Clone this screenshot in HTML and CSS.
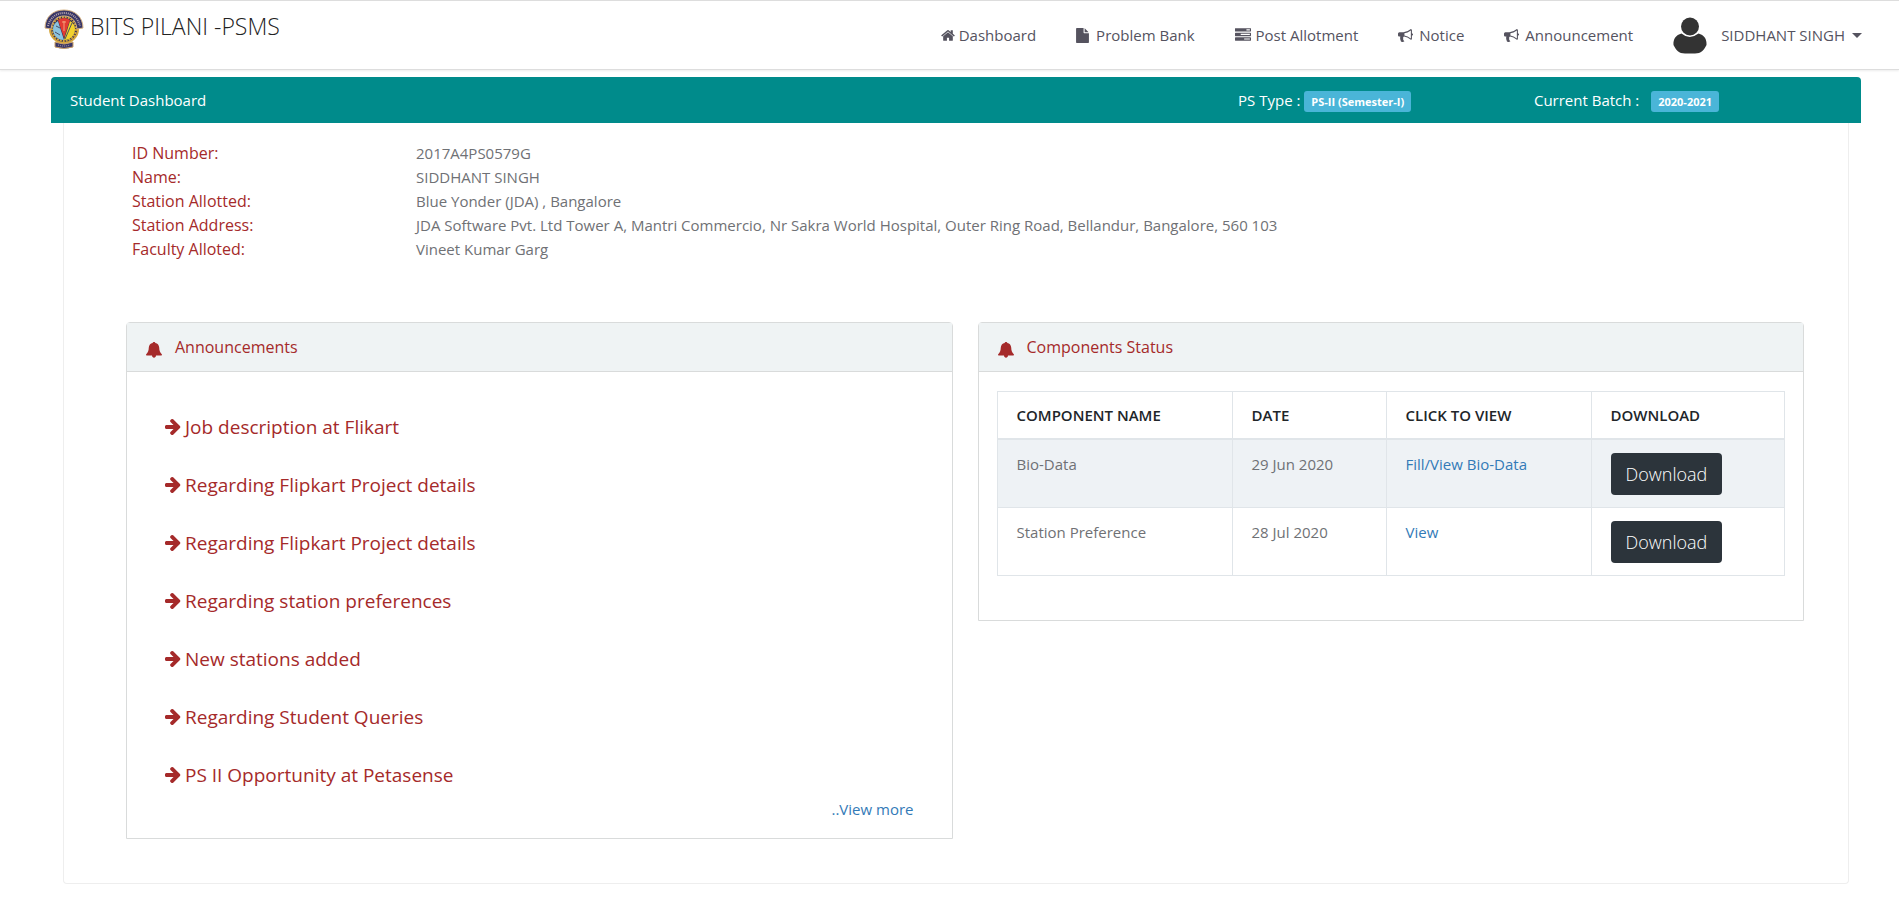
FILE: index.html
```html
<!DOCTYPE html>
<html lang="en">
<head>
<meta charset="utf-8">
<title>BITS PILANI -PSMS</title>
<link rel="stylesheet" href="styles.css">
</head>
<body>
<svg class="sprite" aria-hidden="true">
  <symbol id="home" viewBox="64 0 1664 1792"><path d="M1472 992v480q0 26-19 45t-45 19h-384v-384h-256v384h-384q-26 0-45-19t-19-45v-480q0-1 .5-3t.5-3l575-474 575 474q1 2 1 6zm223-69l-62 74q-8 9-21 11h-3q-13 0-21-7l-692-577-692 577q-12 8-24 7-13-2-21-11l-62-74q-8-10-7-23.500t11-21.500l719-599q32-26 76-26t76 26l244 204v-195q0-14 9-23t23-9h192q14 0 23 9t9 23v408l219 182q10 8 11 21.500t-7 23.500z"/></symbol>
  <symbol id="file" viewBox="128 0 1536 1792"><path d="M1152 512v-472q22 14 36 28l408 408q14 14 28 36h-472zm-128 32q0 40 28 68t68 28h544v1056q0 40-28 68t-68 28h-1344q-40 0-68-28t-28-68v-1600q0-40 28-68t68-28h800v544z"/></symbol>
  <symbol id="tasks" viewBox="0 0 1792 1792"><path d="M1024 1408h640v-128h-640v128zm-384-512h1024v-128h-1024v128zm640-512h384v-128h-384v128zm512 832v256q0 26-19 45t-45 19h-1664q-26 0-45-19t-19-45v-256q0-26 19-45t45-19h1664q26 0 45 19t19 45zm0-512v256q0 26-19 45t-45 19h-1664q-26 0-45-19t-19-45v-256q0-26 19-45t45-19h1664q26 0 45 19t19 45zm0-512v256q0 26-19 45t-45 19h-1664q-26 0-45-19t-19-45v-256q0-26 19-45t45-19h1664q26 0 45 19t19 45z"/></symbol>
  <symbol id="horn" viewBox="0 0 1792 1792"><path d="M1664 640q53 0 90.500 37.500t37.500 90.500-37.500 90.500-90.500 37.500v384q0 52-38 90t-90 38q-417-347-812-380-58 19-91 66t-31 100.500 40 92.500q-20 33-23 65.500t6 58 33.500 55 48 50 61.500 50.500q-29 58-111.500 83t-168.500 11.500-132-55.500q-7-23-29.500-87.500t-32-94.500-23-89-15-101 3.500-98.500 22-110.500h-122q-66 0-113-47t-47-113v-192q0-66 47-113t113-47h480q435 0 896-384 52 0 90 38t38 90v384zm-128 604v-954q-394 302-768 343v270q377 42 768 341z"/></symbol>
  <symbol id="arrow" viewBox="128 128 1536 1664"><path d="M1600 960q0 54-37 91l-651 651q-39 37-91 37-51 0-90-37l-75-75q-38-38-38-91t38-91l293-293h-704q-52 0-84.500-37.500t-32.500-90.500v-128q0-53 32.500-90.500t84.500-37.500h704l-293-294q-38-36-38-90t38-90l75-75q38-38 90-38 53 0 91 38l651 651q37 35 37 90z"/></symbol>
  <symbol id="bell" viewBox="0 0 16 16"><path d="M8 0c.8 0 1.200.4 1.300 1 2.500.5 3.700 2.100 3.900 4.600.2 3.300.6 4.600 2.600 6.700.4.500.1 1.200-.5 1.200H10c-.1 1.400-.9 2.200-2 2.200s-1.900-.8-2-2.200H.7c-.6 0-.9-.7-.5-1.200 2-2.100 2.400-3.400 2.600-6.700C3 3.100 4.200 1.500 6.700 1 6.800.4 7.200 0 8 0z"/></symbol>
</svg>

<header class="topbar">
  <a class="brand" href="#">
    <svg class="logo" viewBox="0 0 40 40" aria-hidden="true">
      <circle cx="20" cy="20" r="14" fill="#2d2b55" stroke="#d5a63b" stroke-width="2"/>
      <circle cx="20" cy="20" r="12" fill="none" stroke="#d5a63b" stroke-width="2" stroke-dasharray="2 1"/>
      <path d="M1 19C1 8 9 1 20 1s19 7 19 18l-6 1C32 11 27 7 20 7S8 11 7 20z" fill="#383666" stroke="#d7b384"/>
      <path d="M4 17C6 9 12 4 20 4s14 5 16 13" fill="none" stroke="#b7a5ad" stroke-width="2" stroke-dasharray="1 1"/>
      <path d="M14 12l6 19c-7 0-11-5-11-11 0-4 2-6 5-8z" fill="#8bc4e0"/>
      <path d="M14 11q6-4 12 0l-6 18z" fill="#e23b32"/>
      <path d="M26 12c3 2 5 4 5 8 0 6-4 11-11 11z" fill="#f2d22c"/>
      <path d="M28 14l-7 16M11 23l5 3M12 17l4 2" stroke="#4b5064" fill="none"/>
      <path d="M20 12v10M18 13h4" stroke="#f4a27a"/>
      <path d="M11 33l4 1q5 2 10 0l4-1v5q-9 3-18 0z" fill="#3a3768" stroke="#caa067"/>
      <path d="M14 36q6 2 12 0" stroke="#bba4a4" stroke-dasharray="1 1" fill="none"/>
    </svg>
    <span>BITS PILANI -PSMS</span>
  </a>
  <nav class="nav">
    <a href="#"><svg class="ico home"><use href="#home"/></svg>Dashboard</a>
    <a href="#"><svg class="ico file"><use href="#file"/></svg>Problem Bank</a>
    <a href="#"><svg class="ico tasks"><use href="#tasks"/></svg>Post Allotment</a>
    <a href="#"><svg class="ico"><use href="#horn"/></svg>Notice</a>
    <a href="#"><svg class="ico"><use href="#horn"/></svg>Announcement</a>
    <button class="user" type="button">
      <svg class="avatar" viewBox="0 0 34 37" aria-hidden="true"><circle cx="17" cy="9.500" r="9"/><path d="M8.500 16.500q8 7 17 0C31 18 34 22 33.500 28 31 33 28 36.500 22 36.500H12C6 36.500 3 33 .5 28 0 22 3 18 8.500 16.500z"/></svg>
      <span>SIDDHANT SINGH</span>
      <span class="caret"></span>
    </button>
  </nav>
</header>

<main class="page">
  <div class="titlebar">
    <h1>Student Dashboard</h1>
    <p>PS Type : <span class="badge">PS-II (Semester-I)</span></p>
    <p>Current Batch : <span class="badge spaced">2020-2021</span></p>
  </div>
  <div class="card">
    <dl class="info">
      <dt>ID Number:</dt><dd>2017A4PS0579G</dd>
      <dt>Name:</dt><dd>SIDDHANT SINGH</dd>
      <dt>Station Allotted:</dt><dd>Blue Yonder (JDA) , Bangalore</dd>
      <dt>Station Address:</dt><dd>JDA Software Pvt. Ltd Tower A, Mantri Commercio, Nr Sakra World Hospital, Outer Ring Road, Bellandur, Bangalore, 560 103</dd>
      <dt>Faculty Alloted:</dt><dd>Vineet Kumar Garg</dd>
    </dl>
    <div class="panels">
      <section class="panel">
        <h2><svg class="bell"><use href="#bell"/></svg>Announcements</h2>
        <div class="news">
          <ul>
            <li><a href="#"><svg class="arrow"><use href="#arrow"/></svg>Job description at Flikart</a></li>
            <li><a href="#"><svg class="arrow"><use href="#arrow"/></svg>Regarding Flipkart Project details</a></li>
            <li><a href="#"><svg class="arrow"><use href="#arrow"/></svg>Regarding Flipkart Project details</a></li>
            <li><a href="#"><svg class="arrow"><use href="#arrow"/></svg>Regarding station preferences</a></li>
            <li><a href="#"><svg class="arrow"><use href="#arrow"/></svg>New stations added</a></li>
            <li><a href="#"><svg class="arrow"><use href="#arrow"/></svg>Regarding Student Queries</a></li>
            <li><a href="#"><svg class="arrow"><use href="#arrow"/></svg>PS II Opportunity at Petasense</a></li>
          </ul>
          <a class="more" href="#">..View more</a>
        </div>
      </section>
      <section class="panel">
        <h2><svg class="bell"><use href="#bell"/></svg>Components Status</h2>
        <div class="status">
          <table>
            <colgroup><col class="c-name"><col class="c-date"><col class="c-view"><col></colgroup>
            <thead><tr><th>COMPONENT NAME</th><th>DATE</th><th>CLICK TO VIEW</th><th>DOWNLOAD</th></tr></thead>
            <tbody>
              <tr><td>Bio-Data</td><td>29 Jun 2020</td><td><a href="#">Fill/View Bio-Data</a></td><td><button class="btn" type="button">Download</button></td></tr>
              <tr><td>Station Preference</td><td>28 Jul 2020</td><td><a href="#">View</a></td><td><button class="btn" type="button">Download</button></td></tr>
            </tbody>
          </table>
        </div>
      </section>
    </div>
  </div>
</main>
</body>
</html>
```
FILE: styles.css
```css
* { box-sizing: border-box; }
body {
  margin: 0;
  background: #fff;
  color: #6f7175;
  font: 15px/24px "Open Sans", sans-serif;
}
a { color: #337ab7; text-decoration: none; }
h1, h2, p, ul, dl, dd { margin: 0; padding: 0; }
svg { fill: currentColor; flex: none; }
.sprite { position: absolute; width: 0; height: 0; }

.topbar {
  display: flex;
  justify-content: space-between;
  height: 70px;
  padding: 0 37px 0 44px;
  border-top: 1px solid #ddd;
  border-bottom: 1px solid #ddd;
  box-shadow: 0 1px 2px rgba(0, 0, 0, .08);
}
.brand {
  display: flex;
  gap: 6px;
  padding-top: 8px;
  color: #222;
  font-size: 23px;
  font-weight: 300;
  line-height: 34px;
}
.logo { width: 40px; height: 40px; }
.nav { display: flex; align-items: center; gap: 40px; color: #55535f; }
.nav a { display: flex; align-items: center; color: inherit; }
.ico { width: 15px; height: 15px; margin-right: 6px; }
.home { width: 14px; margin-right: 4px; }
.file { width: 13px; margin-right: 7px; }
.tasks { width: 16px; height: 16px; margin-right: 5px; }
.user {
  display: flex;
  align-items: center;
  padding: 0;
  border: 0;
  background: none;
  color: inherit;
  font: inherit;
}
.avatar { width: 34px; height: 37px; margin-right: 14px; color: #333; }
.caret {
  margin-left: 7px;
  border: 5px solid transparent;
  border-top-color: currentColor;
  border-bottom: 0;
}

.page { padding: 7px 38px 0 51px; }
.titlebar {
  display: grid;
  grid-template-columns: 75fr 19fr 21fr;
  align-items: center;
  height: 46px;
  padding-left: 19px;
  border-radius: 4px 4px 0 0;
  background: #008b8b;
  color: #fff;
}
.titlebar h1 { font-size: 15px; font-weight: 400; }
.badge {
  display: inline-block;
  padding: 0 7px;
  border-radius: 3px;
  background: #4ab5d8;
  font-size: 11px;
  font-weight: 700;
  line-height: 21px;
}
.spaced { margin-left: 8px; }
.card {
  margin: 0 12px;
  padding: 18px 44px 44px 62px;
  border: 1px solid #eee;
  border-top: 0;
  border-radius: 0 0 4px 4px;
}
.info {
  display: grid;
  grid-template-columns: 284px 1fr;
  padding-left: 6px;
}
.info dt { color: #a52a2a; font-size: 16px; }

.panels {
  display: grid;
  grid-template-columns: 1fr 1fr;
  align-items: start;
  gap: 25px;
  margin-top: 61px;
}
.panel { border: 1px solid #d9dbdb; border-radius: 4px 4px 0 0; }
.panel h2 {
  display: flex;
  align-items: center;
  gap: 13px;
  height: 49px;
  padding-left: 19px;
  border-bottom: 1px solid #d9dbdb;
  background: #eff3f4;
  color: #a52a2a;
  font-size: 16px;
  font-weight: 400;
}
.bell { width: 16px; height: 16px; margin-top: 6px; }
.news { display: flex; flex-direction: column; padding: 41px 38px 17px; }
.news ul { display: grid; gap: 30px; list-style: none; }
.news li a {
  display: flex;
  align-items: center;
  gap: 4px;
  color: #a52a2a;
  font-size: 19px;
  line-height: 28px;
}
.arrow { width: 16px; height: 18px; }
.more { align-self: flex-end; margin-top: 8px; }

.status { padding: 19px 18px 44px; }
table { width: 100%; border-collapse: collapse; table-layout: fixed; }
.c-name { width: 235px; }
.c-date { width: 154px; }
.c-view { width: 205px; }
th, td {
  padding: 12px 19px;
  border: 1px solid #e0e5e9;
  text-align: left;
  vertical-align: top;
}
th {
  padding-top: 11px;
  padding-bottom: 11px;
  border-bottom-width: 2px;
  color: #212529;
  font-weight: 600;
}
tbody tr:first-child { background: #eef2f5; }
.btn {
  display: block;
  height: 42px;
  margin-top: 1px;
  padding: 0 15px;
  border: 0;
  border-radius: 4px;
  background: #2c343b;
  color: #fff;
  font: 300 18px/42px "Open Sans", sans-serif;
}
```
